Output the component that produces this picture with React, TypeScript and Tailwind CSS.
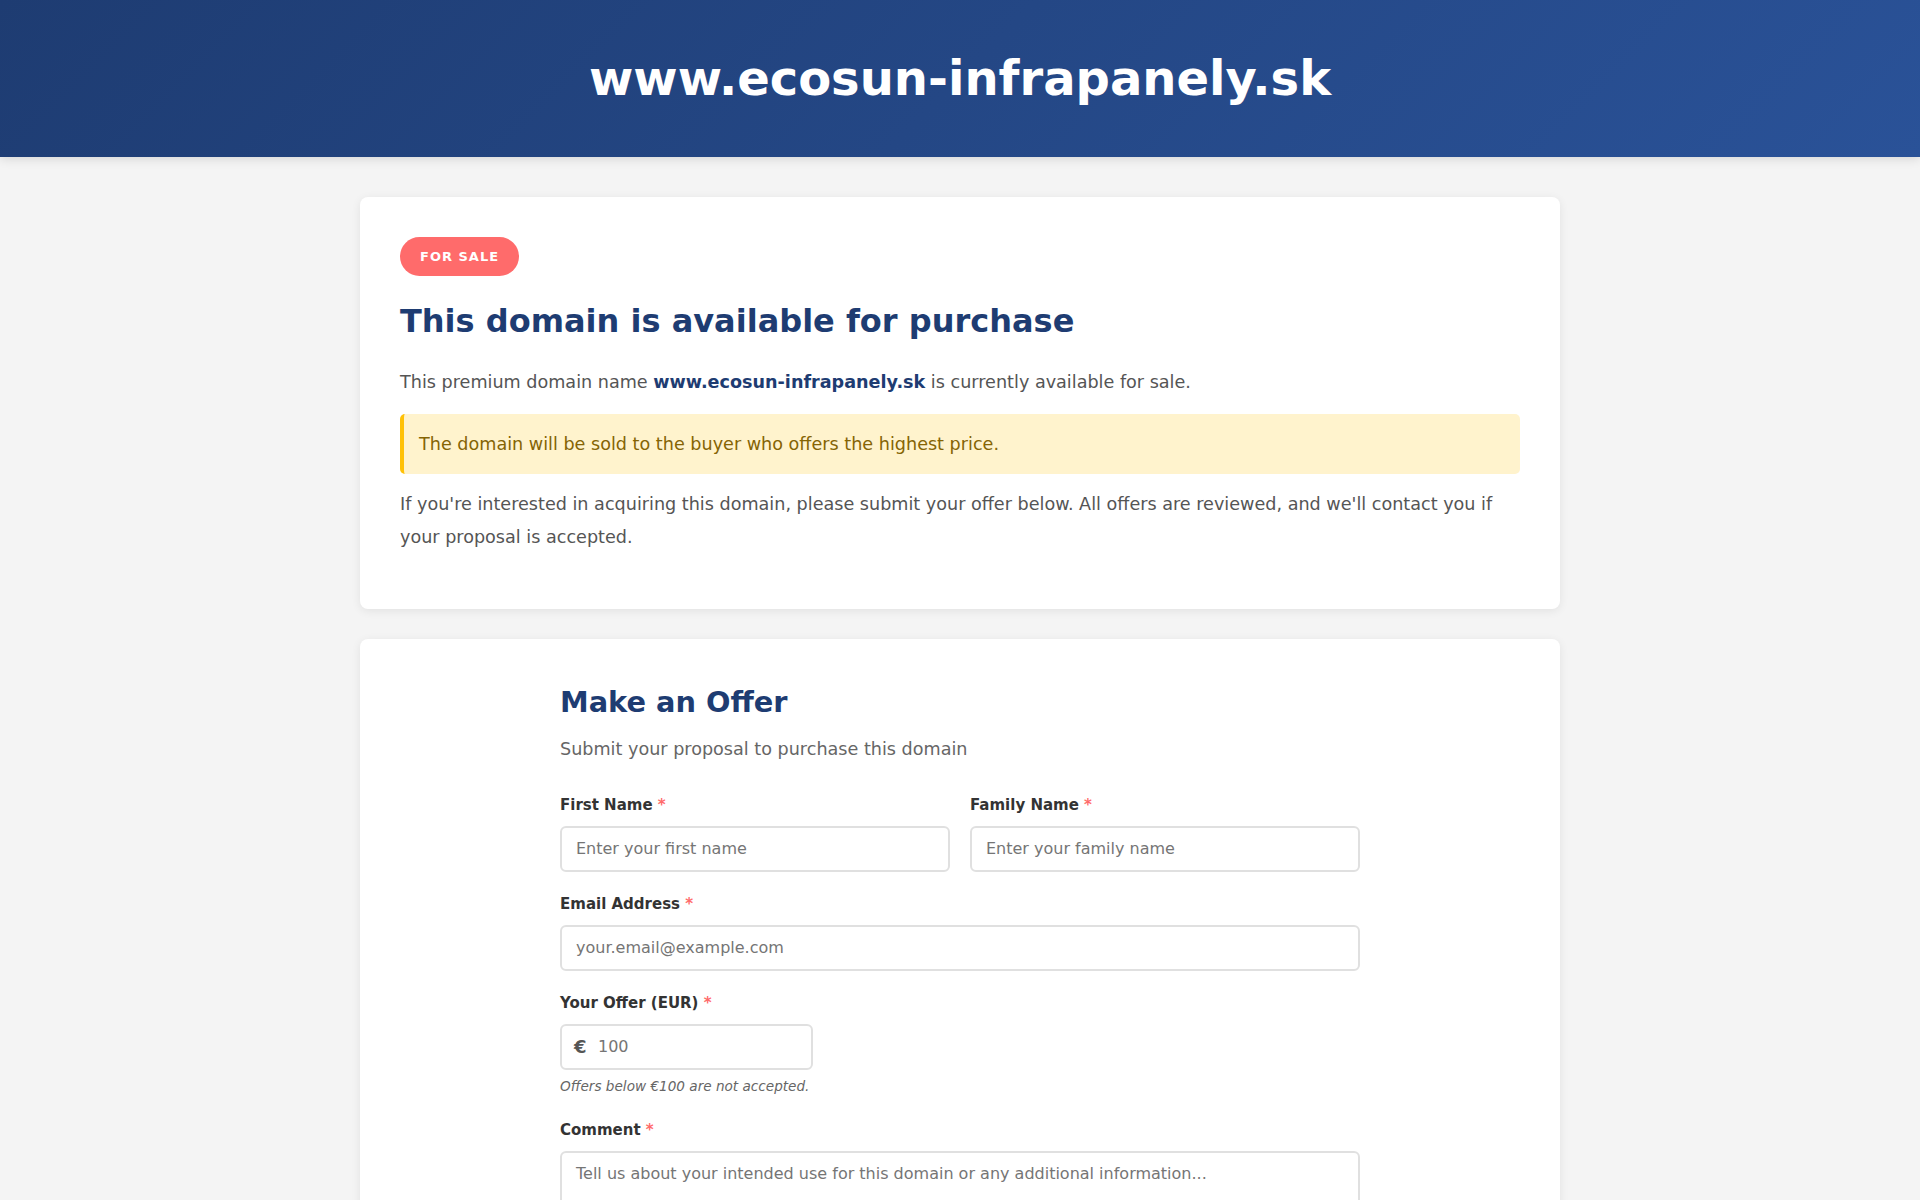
import React from "react";

function Req() {
  return <span className="font-bold text-[#ff6b6b]"> *</span>;
}

export default function App() {
  return (
    <div className="min-h-screen bg-[#f4f4f4] font-['DejaVu_Sans',sans-serif] text-[#555]">
      <header className="bg-[linear-gradient(135deg,#1e3c72_0%,#2a5298_100%)] py-[50px] text-center shadow-[0_2px_10px_rgba(0,0,0,0.12)]">
        <h1 className="text-[48px] leading-[57px] font-bold text-white">www.ecosun-infrapanely.sk</h1>
      </header>

      <main className="mx-auto w-[1200px] pt-[40px] pb-[40px]">
        <section className="rounded-[8px] bg-white px-[40px] pt-[40px] pb-[56px] shadow-[0_2px_10px_rgba(0,0,0,0.08)]">
          <span className="inline-block h-[39px] rounded-full bg-[#ff6b6b] px-[20px] text-[13px] leading-[39px] font-bold tracking-[1px] text-white">
            FOR SALE
          </span>
          <h2 className="mt-[26px] text-[32px] leading-[38px] font-bold text-[#1e3c72]">
            This domain is available for purchase
          </h2>
          <p className="mt-[26px] text-[17.6px] leading-[32.5px]">
            This premium domain name <strong className="font-bold text-[#1e3c72]">www.ecosun-infrapanely.sk</strong> is currently available for sale.
          </p>
          <div className="mt-[15px] rounded-[5px] border-l-4 border-[#ffc107] bg-[#fff3cd] px-[15px] py-[14px] text-[17.6px] leading-[32.5px] text-[#856404]">
            The domain will be sold to the buyer who offers the highest price.
          </div>
          <p className="mt-[14px] text-[17.6px] leading-[32.5px]">
            If you're interested in acquiring this domain, please submit your offer below. All offers are reviewed, and we'll contact you if your proposal is accepted.
          </p>
        </section>

        <section className="mt-[30px] rounded-[8px] bg-white px-[40px] pt-[46px] pb-[48px] shadow-[0_2px_10px_rgba(0,0,0,0.08)]">
          <div className="mx-auto w-[800px]">
            <h2 className="text-[28.8px] leading-[34px] font-bold text-[#1e3c72]">Make an Offer</h2>
            <p className="mt-[14px] text-[17.6px] leading-[32.5px] text-[#666]">Submit your proposal to purchase this domain</p>

            <form className="mt-[28px]" onSubmit={(e) => e.preventDefault()}>
              <div className="grid grid-cols-2 gap-[20px]">
                <div>
                  <label className="mb-[10px] block text-[15px] leading-[22px] font-bold text-[#333]">
                    First Name<Req />
                  </label>
                  <input
                    type="text"
                    placeholder="Enter your first name"
                    className="block h-[46px] w-full rounded-[6px] border-2 border-[#e0e0e0] bg-white px-[14px] text-[16px] text-[#333] outline-none placeholder:text-[#757575]"
                  />
                </div>
                <div>
                  <label className="mb-[10px] block text-[15px] leading-[22px] font-bold text-[#333]">
                    Family Name<Req />
                  </label>
                  <input
                    type="text"
                    placeholder="Enter your family name"
                    className="block h-[46px] w-full rounded-[6px] border-2 border-[#e0e0e0] bg-white px-[14px] text-[16px] text-[#333] outline-none placeholder:text-[#757575]"
                  />
                </div>
              </div>

              <div className="mt-[21px]">
                <label className="mb-[10px] block text-[15px] leading-[22px] font-bold text-[#333]">
                  Email Address<Req />
                </label>
                <input
                  type="email"
                  placeholder="your.email@example.com"
                  className="block h-[46px] w-full rounded-[6px] border-2 border-[#e0e0e0] bg-white px-[14px] text-[16px] text-[#333] outline-none placeholder:text-[#757575]"
                />
              </div>

              <div className="mt-[21px]">
                <label className="mb-[10px] block text-[15px] leading-[22px] font-bold text-[#333]">
                  Your Offer (EUR)<Req />
                </label>
                <div className="relative w-[253px]">
                  <span className="absolute top-0 left-[14px] flex h-[46px] items-center text-[18px] font-bold text-[#555]">€</span>
                  <input
                    type="number"
                    placeholder="100"
                    className="block h-[46px] w-full rounded-[6px] border-2 border-[#e0e0e0] bg-white pr-[14px] pl-[36px] text-[16px] text-[#333] outline-none placeholder:text-[#757575]"
                  />
                </div>
                <p className="mt-[5px] text-[13.6px] leading-[22px] text-[#666] italic">Offers below €100 are not accepted.</p>
              </div>

              <div className="mt-[22px]">
                <label className="mb-[10px] block text-[15px] leading-[22px] font-bold text-[#333]">
                  Comment<Req />
                </label>
                <textarea
                  placeholder="Tell us about your intended use for this domain or any additional information..."
                  className="block h-[130px] w-full resize-y rounded-[6px] border-2 border-[#e0e0e0] bg-white px-[14px] pt-[10px] text-[16px] leading-[22px] text-[#333] outline-none placeholder:text-[#757575]"
                />
              </div>

              <button
                type="submit"
                className="mt-[24px] h-[50px] w-full rounded-[6px] bg-[linear-gradient(135deg,#1e3c72_0%,#2a5298_100%)] text-[17px] font-bold text-white"
              >
                Submit Offer
              </button>
            </form>
          </div>
        </section>
      </main>
    </div>
  );
}
